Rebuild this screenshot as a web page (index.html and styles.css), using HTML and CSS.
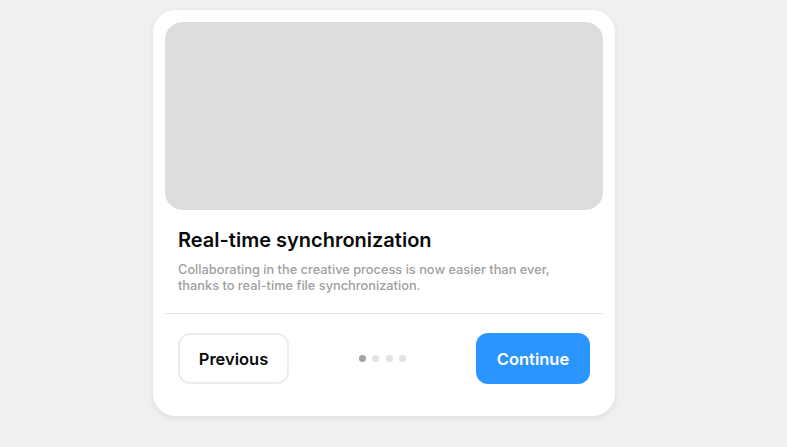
FILE: index.html
```html
<!DOCTYPE html>
<html lang="en">
<head>
<meta charset="utf-8">
<title>Onboarding</title>
<link rel="stylesheet" href="styles.css">
</head>
<body>
<main class="stage">
  <article class="card">
    <div class="media"></div>
    <div class="content">
      <h2 class="title">Real-time synchronization</h2>
      <p class="desc">Collaborating in the creative process is now easier than ever, thanks to real-time file synchronization.</p>
    </div>
    <hr class="divider">
    <div class="actions">
      <button class="btn btn-secondary">Previous</button>
      <div class="dots">
        <span class="dot active"></span>
        <span class="dot"></span>
        <span class="dot"></span>
        <span class="dot"></span>
      </div>
      <button class="btn btn-primary">Continue</button>
    </div>
  </article>
</main>
</body>
</html>
```
FILE: styles.css
```css
* { box-sizing: border-box; }
html, body { margin: 0; padding: 0; }
body {
  background: #f0f0f0;
  font-family: Inter, "Noto Sans", sans-serif;
  width: 787px;
  height: 447px;
  overflow: hidden;
}
.stage {
  display: flex;
  justify-content: flex-start;
  padding-top: 10px;
  padding-left: 153px;
}
.card {
  width: 462px;
  background: #ffffff;
  border-radius: 22px;
  padding: 12px;
  box-shadow: 0 2px 6px rgba(0,0,0,0.08);
  display: flex;
  flex-direction: column;
}
.media {
  height: 188px;
  background: #dddddd;
  border-radius: 18px;
}
.content {
  padding: 18px 13px 0;
}
.title {
  margin: 0;
  font-size: 20px;
  line-height: 24px;
  font-weight: 600;
  color: #0a0a0a;
}
.desc {
  margin: 10px 0 0;
  font-size: 12.8px;
  line-height: 16px;
  font-weight: 500;
  color: #a0a0a0;
}
.divider {
  border: 0;
  border-top: 1px solid #e2e2e2;
  margin: 19px 0 0;
}
.actions {
  display: flex;
  align-items: center;
  justify-content: space-between;
  padding: 19px 13px 20px;
}
.btn {
  height: 51px;
  border-radius: 12px;
  font-family: inherit;
  font-size: 16.5px;
  font-weight: 600;
  padding: 0;
  cursor: pointer;
}
.btn-secondary {
  background: #ffffff;
  border: 2px solid #ececec;
  color: #0a0a0a;
  width: 111px;
}
.btn-primary {
  background: #2b95ff;
  border: 0;
  color: #ffffff;
  width: 114px;
}
.dots {
  display: flex;
  gap: 6.5px;
  margin-left: 0;
}
.dot {
  width: 7px;
  height: 7px;
  border-radius: 50%;
  background: #e3e3e3;
}
.dot.active { background: #a3a3a3; }
```
